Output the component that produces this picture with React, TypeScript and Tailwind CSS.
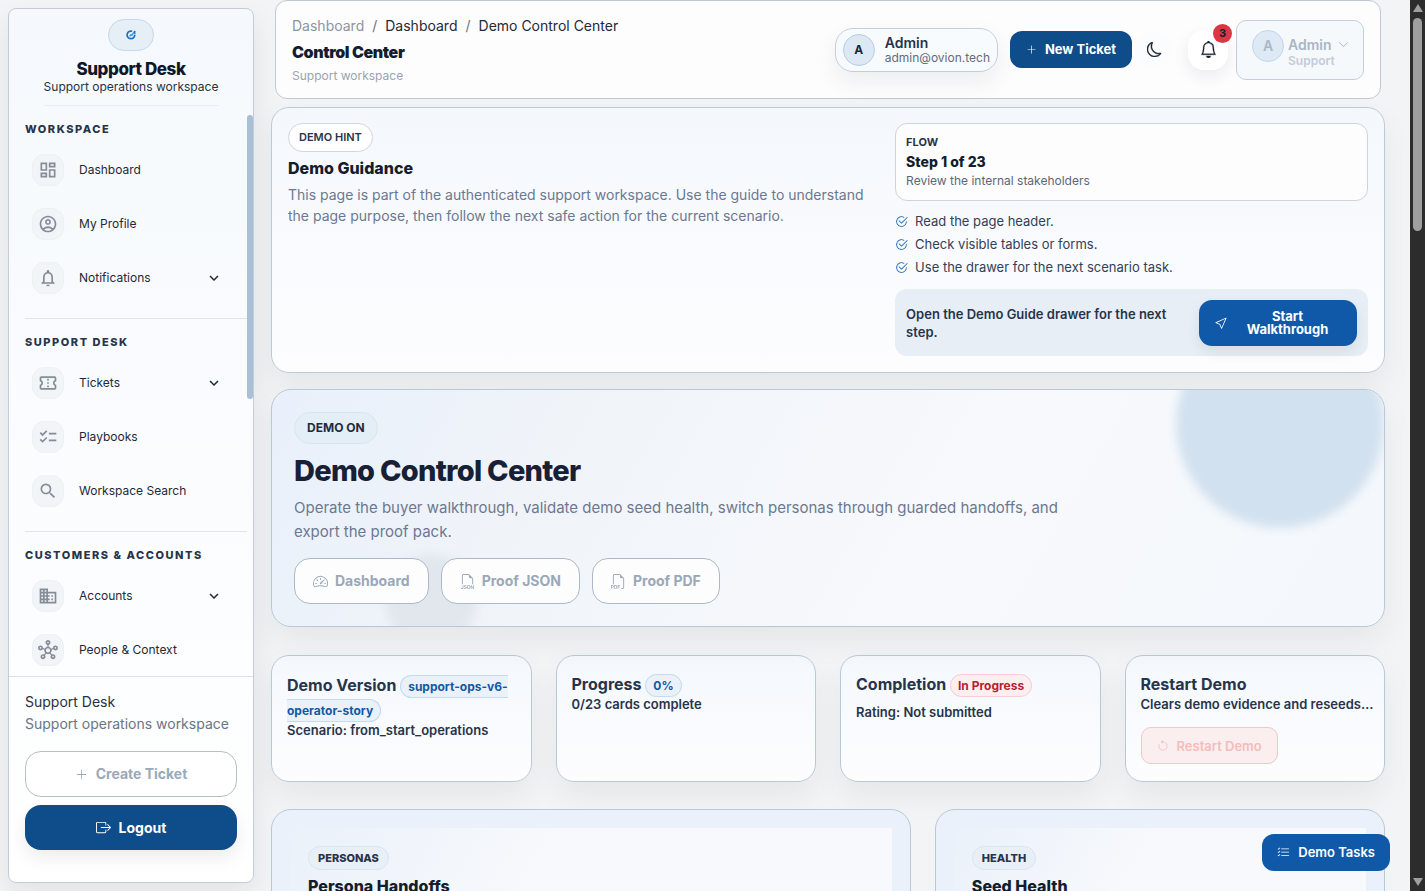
import React from 'react';
import type { IconType } from 'react-icons';
import {
  BsArrowCounterclockwise,
  BsBell,
  BsBoxArrowRight,
  BsCheck2Circle,
  BsChevronDown,
  BsCursor,
  BsFiletypeJson,
  BsFiletypePdf,
  BsListCheck,
  BsMoon,
  BsPlusLg,
  BsSpeedometer2,
} from 'react-icons/bs';
import {
  MdChecklist,
  MdDomain,
  MdKeyboardArrowDown,
  MdNotificationsNone,
  MdOutlineAccountCircle,
  MdOutlineConfirmationNumber,
  MdOutlineDashboard,
  MdOutlineHub,
  MdSearch,
} from 'react-icons/md';

interface NavItem {
  label: string;
  icon: IconType;
  expandable?: boolean;
}

const navSections: { title: string; items: NavItem[] }[] = [
  {
    title: 'Workspace',
    items: [
      { label: 'Dashboard', icon: MdOutlineDashboard },
      { label: 'My Profile', icon: MdOutlineAccountCircle },
      { label: 'Notifications', icon: MdNotificationsNone, expandable: true },
    ],
  },
  {
    title: 'Support Desk',
    items: [
      { label: 'Tickets', icon: MdOutlineConfirmationNumber, expandable: true },
      { label: 'Playbooks', icon: MdChecklist },
      { label: 'Workspace Search', icon: MdSearch },
    ],
  },
  {
    title: 'Customers & Accounts',
    items: [
      { label: 'Accounts', icon: MdDomain, expandable: true },
      { label: 'People & Context', icon: MdOutlineHub },
    ],
  },
];

const checklist = [
  'Read the page header.',
  'Check visible tables or forms.',
  'Use the drawer for the next scenario task.',
];

const heroLinks = [
  { label: 'Dashboard', icon: BsSpeedometer2 },
  { label: 'Proof JSON', icon: BsFiletypeJson },
  { label: 'Proof PDF', icon: BsFiletypePdf },
];

const Sidebar: React.FC = () => (
  <aside className="my-2 ml-2 flex w-[246px] shrink-0 flex-col rounded-lg border border-[#c3ccd8] bg-linear-to-b from-[#f5f9fd] to-white shadow-[0_12px_30px_rgba(15,23,42,0.08)]">
    <div className="flex h-[97px] shrink-0 flex-col items-center pt-[10px]">
      <span className="flex h-8 w-[46px] items-center justify-center rounded-full border border-[#c6d8e9] bg-[#e6eef6]">
        <svg width="10" height="10" viewBox="0 0 10 10" fill="none">
          <path d="M6.2 1.3A3.8 3.8 0 1 0 8.7 4.6" stroke="#1873c4" strokeWidth="1.7" />
          <path d="M3.6 6.2 5 4.6l.9.6L8.8 1" stroke="#36a3dc" strokeWidth="1.4" />
          <path d="M8.8 1v3" stroke="#1862b0" strokeWidth="1.2" />
        </svg>
      </span>
      <strong className="mt-2 text-[17px] leading-5 font-extrabold tracking-tight text-[#101828]">Support Desk</strong>
      <span className="text-xs leading-4 text-[#273142]">Support operations workspace</span>
      <span className="mt-auto h-px w-[175px] bg-[#e9eef4]" />
    </div>

    <nav className="relative min-h-0 flex-1 overflow-hidden pr-1.5 pl-4">
      {navSections.map((section, index) => (
        <div key={section.title} className={index > 0 ? 'border-t border-[#dfe5ec] pt-3 pb-[13px]' : 'pt-3 pb-[13px]'}>
          <h2 className="mb-[3px] text-[11px] leading-[22px] font-extrabold tracking-[0.14em] text-[#273449] uppercase">
            {section.title}
          </h2>
          {section.items.map(({ label, icon: Icon, expandable }) => (
            <a key={label} href="#" className="flex h-[54px] items-center pr-6 pl-[7px] text-xs text-[#1f2937]">
              <span className="mr-[15px] flex size-8 items-center justify-center rounded-xl border border-[#edf0f4] bg-[#f2f5f8]">
                <Icon size={20} className="text-[#858c98]" />
              </span>
              {label}
              {expandable && <MdKeyboardArrowDown size={18} className="ml-auto" />}
            </a>
          ))}
        </div>
      ))}
      <span className="absolute top-[9px] right-0 h-[284px] w-1.5 rounded-sm bg-[#a9bfd6]" />
    </nav>

    <div className="shrink-0 border-t border-[#d8e1ea] px-4 pt-3.5 pb-8">
      <p className="text-sm leading-[22px] text-[#273142]">Support Desk</p>
      <p className="text-sm leading-[22px] text-[#6b7584]">Support operations workspace</p>
      <button className="mt-4 flex h-[46px] w-full items-center justify-center gap-2 rounded-2xl border border-[#b4bfcc] bg-white text-sm font-bold text-[#9aa8b8]">
        <BsPlusLg size={13} />
        Create Ticket
      </button>
      <button className="mt-2 flex h-[45px] w-full items-center justify-center gap-2 rounded-2xl bg-[#0f4c8a] text-sm font-bold text-white shadow-[0_8px_18px_rgba(15,23,42,0.08)]">
        <BsBoxArrowRight size={15} />
        Logout
      </button>
    </div>
  </aside>
);

const Header: React.FC = () => (
  <header className="mx-1 flex h-[99px] shrink-0 items-center justify-between rounded-xl border border-[#c0c8d2] bg-[#fdfdfe] px-4">
    <div className="pt-0.5">
      <nav className="flex gap-2 text-sm leading-5 text-[#1f2937]">
        <a href="#" className="text-[#8d949e]">Dashboard</a>
        <span className="text-[#6b7280]">/</span>
        <a href="#">Dashboard</a>
        <span className="text-[#6b7280]">/</span>
        <span>Demo Control Center</span>
      </nav>
      <h1 className="mt-1 text-base leading-6 font-black tracking-tight text-[#141d2e]">Control Center</h1>
      <p className="mt-0.5 text-xs leading-5 text-[#9aa3b0]">Support workspace</p>
    </div>

    <div className="flex items-center">
      <div className="flex h-11 items-center rounded-[18px] border border-[#c3cedb] bg-[#f8fbfe] px-[7px] shadow-[0_10px_24px_rgba(15,23,42,0.07)]">
        <span className="mr-2.5 flex size-8 items-center justify-center rounded-full border border-[#b9cde0] bg-[#dce8f3] text-xs font-bold text-[#1d2939]">
          A
        </span>
        <div>
          <p className="text-sm leading-[15px] font-semibold text-[#273449]">Admin</p>
          <p className="text-xs leading-[15px] text-[#5f6b7b]">admin@ovion.tech</p>
        </div>
      </div>
      <button className="ml-3 flex h-[37px] w-[122px] items-center justify-center gap-2 rounded-xl bg-[#0f4c8a] text-[13px] font-bold text-white">
        <BsPlusLg size={11} />
        New Ticket
      </button>
      <button aria-label="Dark mode" className="ml-1 flex size-9 items-center justify-center rounded-full bg-[#fafcfe] text-[#141d2e]">
        <BsMoon size={15} strokeWidth={0.5} />
      </button>
      <button
        aria-label="Notifications"
        className="relative ml-4 flex size-10 items-center justify-center rounded-2xl bg-white text-[#141d2e] shadow-[0_6px_16px_rgba(15,23,42,0.08)]"
      >
        <BsBell size={17} strokeWidth={0.3} />
        <span className="absolute -top-1.5 -right-1 flex size-[19px] items-center justify-center rounded-full bg-[#dc3545] text-[11px] font-bold text-[#141d2e]">
          3
        </span>
      </button>
      <button className="ml-2 flex h-[60px] w-32 items-center rounded-[10px] border border-[#c3cfdc] bg-[#f5f9fc] pl-[15px] text-left text-[#a9b6c6]">
        <span className="mr-1 mb-2 flex size-8 items-center justify-center rounded-full border border-[#c2d6ea] bg-[#dde9f4] text-sm font-semibold">
          A
        </span>
        <span className="pt-1.5">
          <span className="flex items-center gap-1.5 text-sm leading-4 font-semibold">
            Admin
            <BsChevronDown size={11} />
          </span>
          <span className="block text-xs leading-4 font-semibold text-[#c3ccd8]">Support</span>
        </span>
      </button>
    </div>
  </header>
);

const Guidance: React.FC = () => (
  <section className="mt-2 grid shrink-0 grid-cols-[minmax(0,1.25fr)_minmax(0,1fr)] gap-4 rounded-[18px] border border-[#bccad8] bg-linear-to-b from-[#f4f8fd] to-[#fdfdfe] px-4 pt-[15px] pb-4 shadow-[0_14px_32px_rgba(15,23,42,0.06)]">
    <div>
      <span className="inline-flex h-[29px] items-center rounded-full border border-[#cfd6de] bg-white px-2.5 text-[11px] font-semibold text-[#273449]">
        DEMO HINT
      </span>
      <h2 className="mt-1 text-base leading-6 font-extrabold text-[#141d2e]">Demo Guidance</h2>
      <p className="mt-1 text-sm leading-[21px] text-[#6c7890]">
        This page is part of the authenticated support workspace. Use the guide to understand the page purpose, then
        follow the next safe action for the current scenario.
      </p>
    </div>

    <div>
      <div className="h-[78px] rounded-xl border border-[#cdd4dc] bg-[#fdfdfe] px-2.5 pt-2">
        <p className="text-[11px] leading-5 font-bold text-[#273449]">FLOW</p>
        <p className="text-sm leading-5 font-extrabold text-[#141d2e]">Step 1 of 23</p>
        <p className="text-xs leading-[17px] text-[#5b6778]">Review the internal stakeholders</p>
      </div>
      <ul className="mt-[9px] text-[13px] text-[#334155]">
        {checklist.map((item) => (
          <li key={item} className="flex h-[23px] items-center gap-[7px]">
            <BsCheck2Circle size={13} className="text-[#1762ad]" />
            {item}
          </li>
        ))}
      </ul>
      <div className="mt-2.5 flex h-[67px] items-center justify-between rounded-xl bg-[#e8eef5] px-[11px]">
        <p className="w-[270px] text-[13px] leading-[18px] font-semibold text-[#273449]">
          Open the Demo Guide drawer for the next step.
        </p>
        <button className="flex h-[46px] w-[158px] items-center rounded-[13px] bg-[#1059a8] pr-2.5 pl-4 text-[13px] leading-[13px] font-bold text-white shadow-[0_6px_14px_rgba(15,23,42,0.08)]">
          <BsCursor size={13} />
          <span className="flex-1 px-4">Start Walkthrough</span>
        </button>
      </div>
    </div>
  </section>
);

const Hero: React.FC = () => (
  <section className="relative mt-4 h-[238px] shrink-0 overflow-hidden rounded-[20px] border border-[#b9c8d9] bg-linear-[120deg,#e9f0fb,#f0f4f9_25%,#f7f9fc_60%,#f4f8fc] px-[22px] pt-[22px] shadow-[0_14px_32px_rgba(15,23,42,0.06)]">
    <span className="absolute -top-[70px] right-0 size-[208px] rounded-full bg-[#d2e1ef] blur-[5px]" />
    <span className="absolute top-[164px] left-[113px] size-[92px] rounded-full bg-[#e2e7ed] blur-[5px]" />
    <div className="relative">
      <span className="inline-flex h-8 items-center rounded-full border border-[#d8e5f0] bg-[#e4eef6] px-3 text-xs font-bold text-[#1f2b3d]">
        DEMO ON
      </span>
      <h2 className="mt-1.5 text-[29px] leading-[42px] font-extrabold tracking-tight text-[#172035]">
        Demo Control Center
      </h2>
      <p className="mt-1 max-w-[780px] text-[15px] leading-6 text-[#6c7890]">
        Operate the buyer walkthrough, validate demo seed health, switch personas through guarded handoffs, and export
        the proof pack.
      </p>
      <div className="mt-3.5 flex gap-3">
        {heroLinks.map(({ label, icon: Icon }) => (
          <a
            key={label}
            href="#"
            className="flex h-[46px] items-center gap-[7px] rounded-2xl border border-[#acb9c8] bg-[#fdfdfe] px-[18px] text-sm font-bold text-[#9aa8b8]"
          >
            <Icon size={15} />
            {label}
          </a>
        ))}
      </div>
    </div>
  </section>
);

const StatCard: React.FC<{ children: React.ReactNode }> = ({ children }) => (
  <div className="h-[127px] rounded-[18px] border border-[#b9c8d9] bg-linear-to-b from-[#f4f8fd] to-[#fdfdfe] pt-[17px] pr-2 pl-[15px] text-[13px] leading-[18px] font-semibold text-[#273449] shadow-[0_14px_32px_rgba(15,23,42,0.06)]">
    {children}
  </div>
);

const Stats: React.FC = () => (
  <section className="mt-7 grid shrink-0 grid-cols-4 gap-6">
    <StatCard>
      <h3 className="text-base leading-6 font-bold">
        Demo Version{' '}
        <span className="rounded-full border border-[#c3daf0] bg-[#eaf1f9] px-[7px] py-[3px] text-xs text-[#1059a8]">
          support-ops-v6-operator-story
        </span>
      </h3>
      <p>Scenario: from_start_operations</p>
    </StatCard>
    <StatCard>
      <h3 className="text-base leading-[22px] font-bold">
        Progress{' '}
        <span className="rounded-full border border-[#c3daf0] bg-[#eaf1f9] px-[7px] py-[3px] text-xs text-[#1059a8]">0%</span>
      </h3>
      <p>0/23 cards complete</p>
    </StatCard>
    <StatCard>
      <h3 className="text-base leading-[22px] font-bold">
        Completion{' '}
        <span className="rounded-full border border-[#f6cdd2] bg-[#fdeff0] px-[7px] py-[3px] text-xs text-[#b42332]">
          In Progress
        </span>
      </h3>
      <p className="mt-2">Rating: Not submitted</p>
    </StatCard>
    <StatCard>
      <h3 className="text-base leading-[22px] font-bold">Restart Demo</h3>
      <p className="whitespace-nowrap">Clears demo evidence and reseeds…</p>
      <button className="mt-3.5 flex h-[37px] items-center gap-2 rounded-[10px] border border-[#f4c6c6] bg-[#fbeeee] px-[15px] text-[13px] font-semibold text-[#f5bcbc]">
        <BsArrowCounterclockwise size={12} />
        Restart Demo
      </button>
    </StatCard>
  </section>
);

const Panel: React.FC<{ tag: string; title: string; className: string }> = ({ tag, title, className }) => (
  <section className={`${className} rounded-[20px] border border-[#b9c8d9] bg-[#ebf1fa] p-[18px]`}>
    <div className="h-80 bg-linear-[120deg,#ebf1fa,#f7f9fc_35%] px-[18px] pt-[18px]">
      <span className="flex h-6 w-fit items-center rounded-full border border-[#dbe6f0] bg-[#e8eff6] px-[9px] text-[11px] font-extrabold text-[#273449]">
        {tag}
      </span>
      <h2 className="mt-1 text-base leading-6 font-extrabold text-[#141d2e]">{title}</h2>
    </div>
  </section>
);

// Dark page scrollbar on the right edge
const PageScrollbar: React.FC = () => (
  <div className="flex w-[15px] shrink-0 flex-col items-center justify-between bg-[#2c2c2c] pt-1 pb-[5px]">
    <div className="flex flex-col items-center gap-1.5">
      <svg width="10" height="8" viewBox="0 0 10 8" fill="#9f9f9f">
        <path d="M5 0 10 8H0z" />
      </svg>
      <span className="h-[213px] w-[9px] rounded-full bg-[#9f9f9f]" />
    </div>
    <svg width="10" height="8" viewBox="0 0 10 8" fill="#9f9f9f">
      <path d="M5 8 0 0h10z" />
    </svg>
  </div>
);

const App: React.FC = () => {
  return (
    <div className="flex h-screen overflow-hidden bg-[#f3f4f5] font-['Inter',sans-serif]">
      <Sidebar />
      <main className="flex min-w-0 flex-1 flex-col pr-[25px] pl-[17px]">
        <Header />
        <Guidance />
        <Hero />
        <Stats />
        <div className="mt-[27px] grid shrink-0 grid-cols-12 gap-6">
          <Panel tag="PERSONAS" title="Persona Handoffs" className="col-span-7" />
          <Panel tag="HEALTH" title="Seed Health" className="col-span-5" />
        </div>
      </main>
      <PageScrollbar />
      <button className="fixed right-[35px] bottom-5 flex h-[37px] items-center gap-2 rounded-xl bg-[#1059a8] px-[15px] text-[13px] font-semibold text-white">
        <BsListCheck size={13} />
        Demo Tasks
      </button>
    </div>
  );
};

export default App;
